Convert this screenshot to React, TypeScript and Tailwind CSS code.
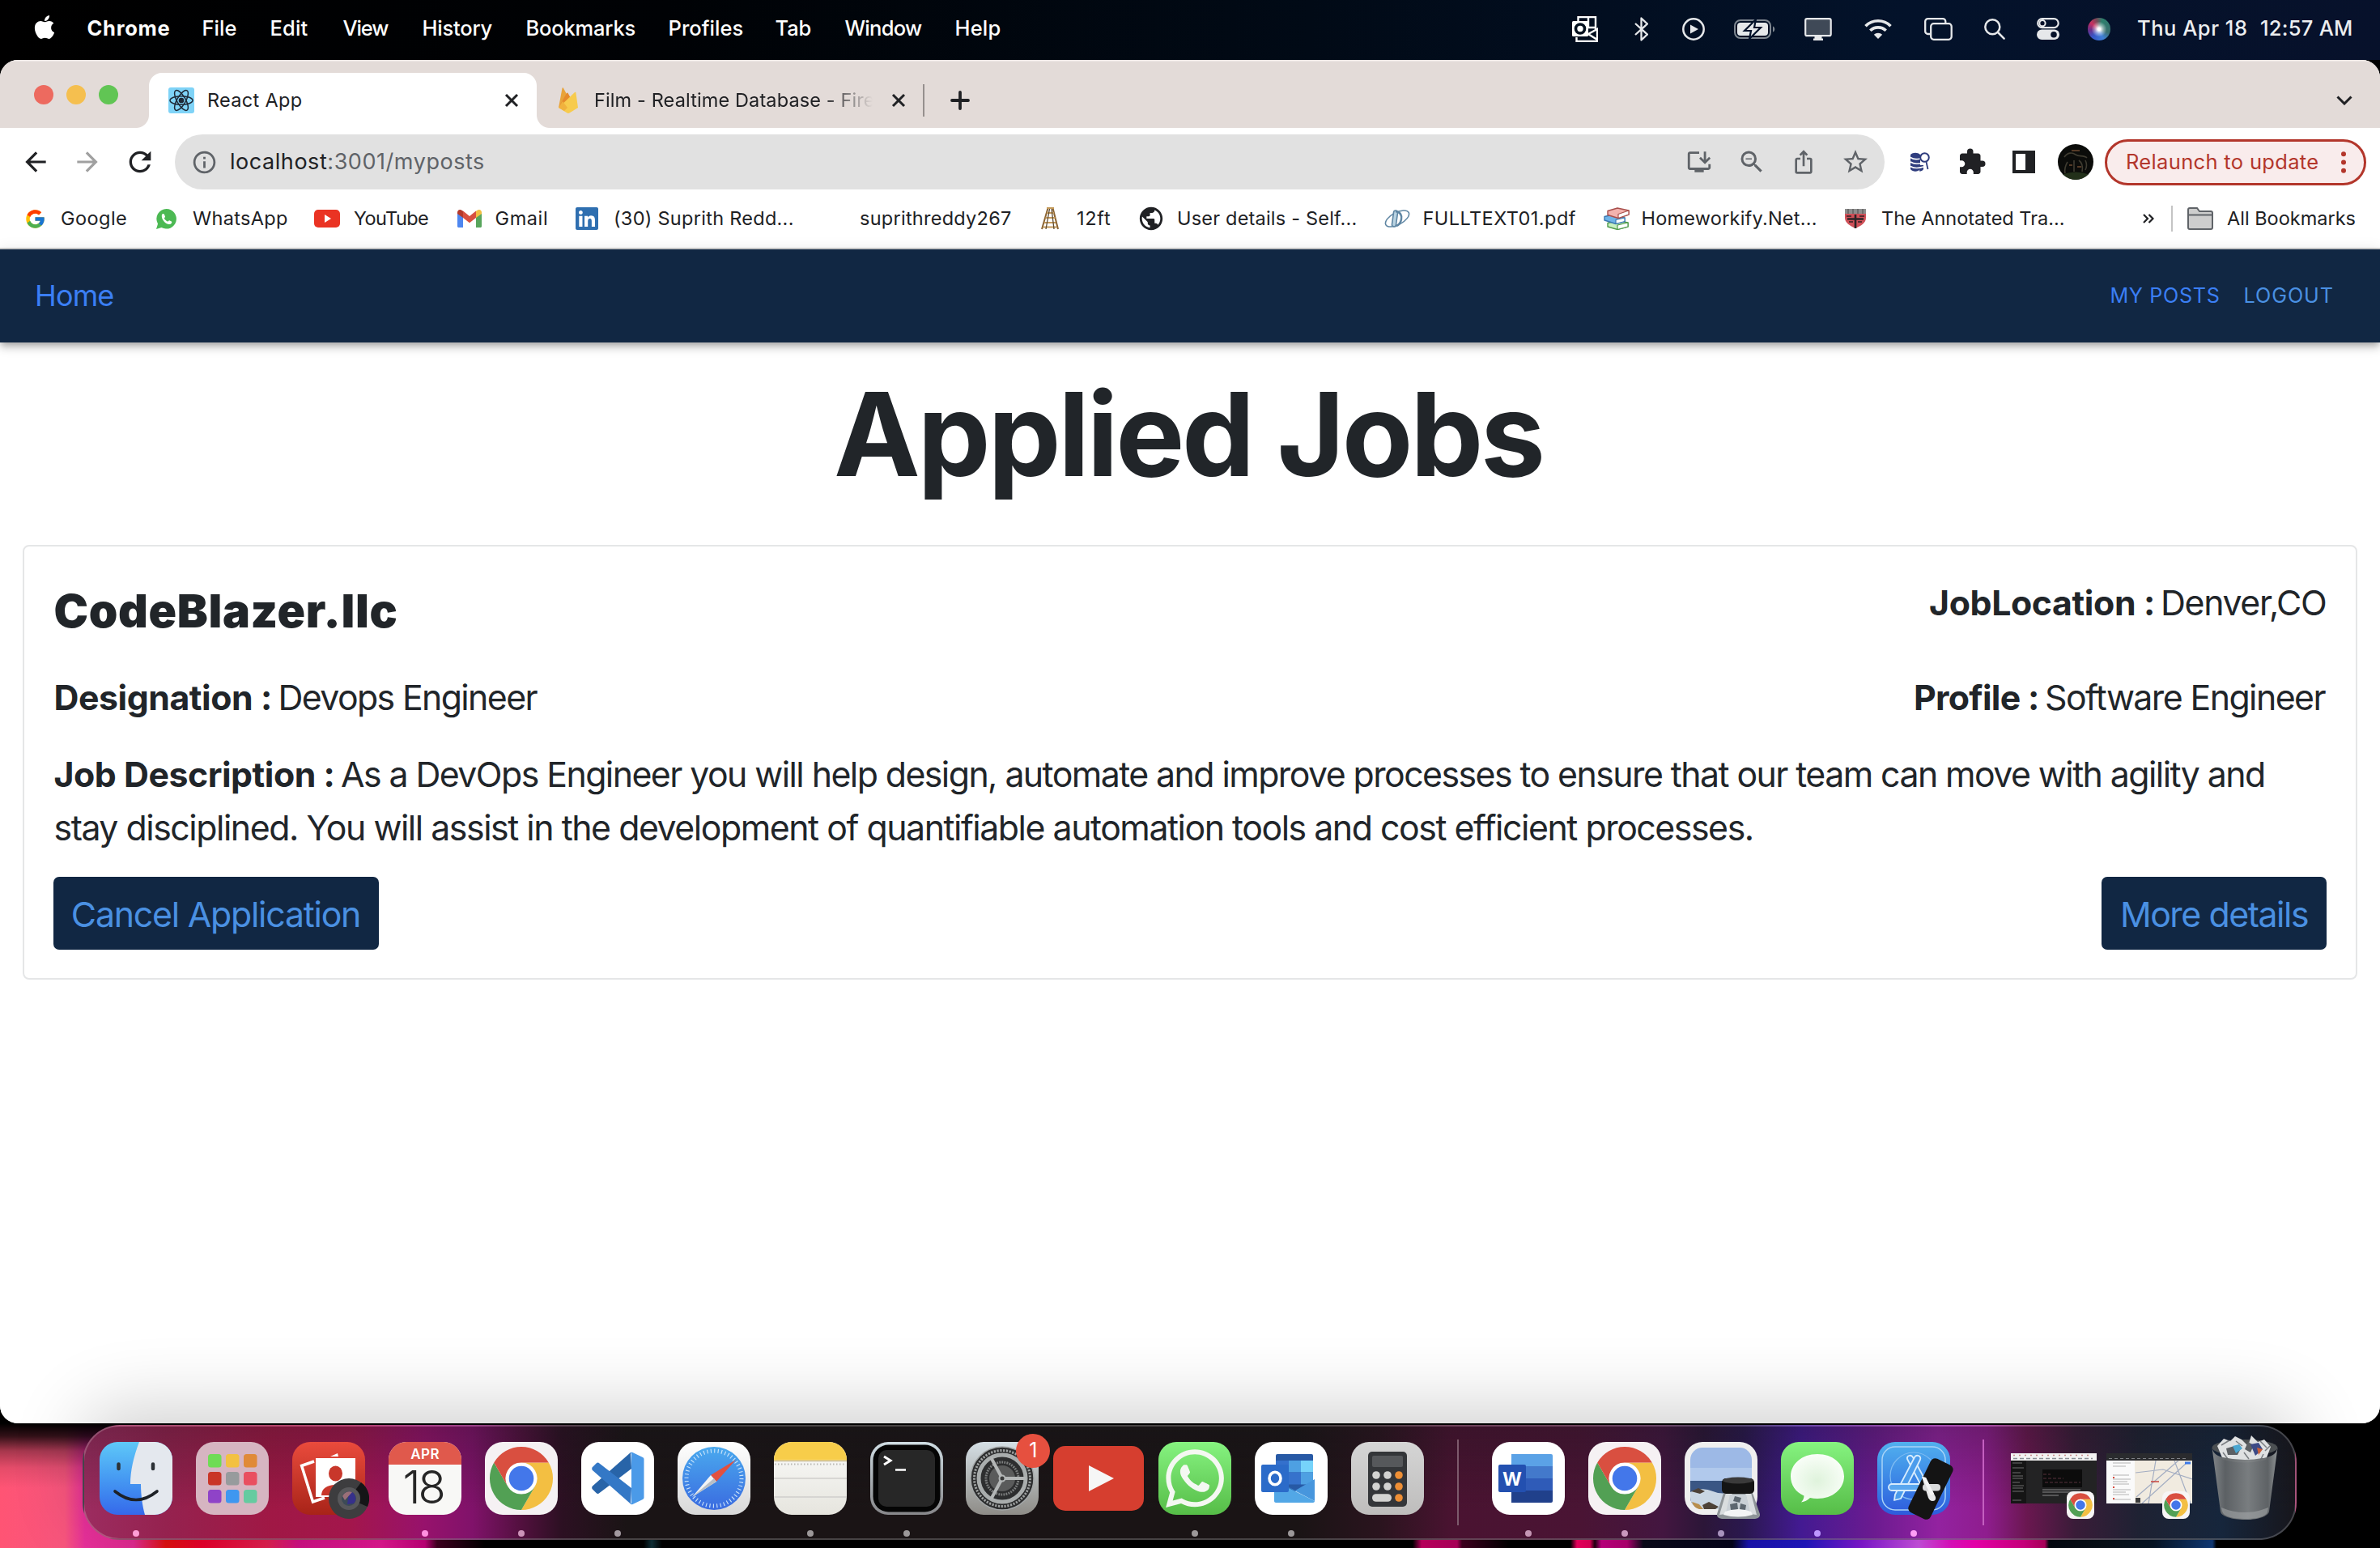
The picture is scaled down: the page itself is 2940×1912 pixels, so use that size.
import type { ReactNode } from "react";
import { FaApple, FaWhatsapp, FaLinkedin } from "react-icons/fa";
import { FcGoogle } from "react-icons/fc";
import {
  MdArrowBack,
  MdArrowForward,
  MdRefresh,
  MdInfoOutline,
  MdInstallDesktop,
  MdZoomOut,
  MdIosShare,
  MdStarOutline,
  MdExtension,
  MdPublic,
} from "react-icons/md";

/* ---------- macOS menu bar ---------- */

const menus = [
  ["Chrome", "w-[142px] tracking-[0.72px] font-bold"],
  ["File", "w-[84px] tracking-[0.04px]"],
  ["Edit", "w-[90px] tracking-[0.14px]"],
  ["View", "w-[98px] tracking-[-1.1px]"],
  ["History", "w-[128px] tracking-[-0.21px]"],
  ["Bookmarks", "w-[176px] tracking-[-0.18px]"],
  ["Profiles", "w-[132px] tracking-[0.04px]"],
  ["Tab", "w-[86px] tracking-[-0.13px]"],
  ["Window", "w-[136px] tracking-[-0.7px]"],
  ["Help", "w-[100px] tracking-[0.2px]"],
];

function StatusIcons() {
  const ink = "#e6e8ea";
  return (
    <>
      <svg className="mr-[45px] h-8 w-8 shrink-0" viewBox="0 0 32 32" fill="none">
        <path d="M7.500 6V1H29v15M5.500 26v5H31V16L20 22l11 7M20 1v13h9" stroke="#fff" strokeWidth="2.400" />
        <rect x="0" y="6" width="20" height="19" rx="1.500" fill="#fff" />
        <circle cx="10" cy="15.500" r="5.500" stroke="#03101f" strokeWidth="3.600" />
      </svg>
      <svg className="mr-[42px] h-[30px] w-[17px] shrink-0" viewBox="0 0 17 30" fill="none" stroke={ink} strokeWidth="2.300" strokeLinejoin="round">
        <path d="M1 8l15 13.500L8.500 28.500V1.500L16 8.500 1 22" />
      </svg>
      <svg className="mr-9 h-7 w-7 shrink-0" viewBox="0 0 28 28" fill="none">
        <circle cx="14" cy="14" r="12.700" stroke={ink} strokeWidth="2.500" />
        <path d="M10 8.500v11l10-5.500z" fill={ink} />
      </svg>
      <svg className="mr-9 h-6 w-[51px] shrink-0" viewBox="0 0 51 24" fill="none">
        <rect x="1" y="1" width="44" height="22" rx="7" stroke="#7f8790" strokeWidth="2" />
        <path d="M48 8.500c3 1 3 6 0 7z" fill="#7f8790" />
        <rect x="4" y="4" width="38" height="16" rx="4" fill={ink} />
        <path d="M27 0L13 14h8l-2 10 14-14h-8z" fill={ink} stroke="#04122a" strokeWidth="2.200" />
      </svg>
      <svg className="mr-10 h-7 w-[34px] shrink-0" viewBox="0 0 34 28" fill="none">
        <rect x="1.200" y="1.200" width="31.500" height="21" rx="2" fill="#3f4957" stroke={ink} strokeWidth="2.200" />
        <path d="M12.500 23h9v2.500h1.500V28H11v-2.500h1.500z" fill={ink} />
      </svg>
      <svg className="mr-10 h-[25px] w-[34px] shrink-0" viewBox="0 0 34 25" fill="none" stroke={ink} strokeWidth="3.600">
        <path d="M1.500 9.200a22 22 0 0 1 31 0M7.300 14.800a14 14 0 0 1 19.400 0" />
        <path d="M17 25l-5.200-5.200a7.500 7.500 0 0 1 10.400 0z" fill={ink} stroke="none" />
      </svg>
      <svg className="mr-[39px] h-7 w-[35px] shrink-0" viewBox="0 0 35 28" fill="none" stroke={ink} strokeWidth="2.300">
        <rect x="8.200" y="7.200" width="25.500" height="19.600" rx="3.500" />
        <path d="M8 20H4.500A3.300 3.300 0 0 1 1.200 16.700V4.500A3.300 3.300 0 0 1 4.500 1.200H23a3.300 3.300 0 0 1 3.300 3.300V7" />
      </svg>
      <svg className="mr-[39px] h-[26px] w-[26px] shrink-0" viewBox="0 0 26 26" fill="none" stroke={ink} strokeWidth="2.500" strokeLinecap="round">
        <circle cx="10.300" cy="10.300" r="9" />
        <path d="M17 17l7.600 7.600" />
      </svg>
      <svg className="mr-[35px] h-[27px] w-7 shrink-0" viewBox="0 0 28 27" fill="none">
        <rect x="1.200" y="1.200" width="25.500" height="11" rx="5.500" stroke={ink} strokeWidth="2.200" />
        <circle cx="7" cy="6.700" r="3.600" stroke={ink} strokeWidth="2" />
        <rect x="0" y="14.500" width="28" height="12.500" rx="6.200" fill={ink} />
        <circle cx="21" cy="20.700" r="3.800" fill="#06122a" />
      </svg>
      <div className="mr-8 h-7 w-7 shrink-0 rounded-full bg-[radial-gradient(circle_at_50%_50%,#fff_0_8%,rgba(255,255,255,0.45)_26%,transparent_48%),conic-gradient(from_20deg,#2c7f6c,#3a6f70_25%,#3f7fd8_38%,#3757c8_55%,#6a2f8a_68%,#c8305f_80%,#7a4a58_90%,#2c7f6c)]" />
    </>
  );
}

function MenuBar() {
  return (
    <div className="flex h-[74px] items-center bg-[linear-gradient(to_right,#000_0%,#000205_28%,#010a16_55%,#03122a_80%,#07112b_100%)] pb-[3px] pl-[38.5px] text-[25.5px] font-medium text-white">
      <div className="w-[69px] shrink-0">
        <FaApple className="-mt-1 h-[33px] w-8" />
      </div>
      {menus.map(([label, cls]) => (
        <span key={label} className={`shrink-0 whitespace-nowrap ${cls}`}>
          {label}
        </span>
      ))}
      <div className="flex flex-1 items-center pl-[662.5px]">
        <StatusIcons />
        <span className="ml-px w-[152px] shrink-0 whitespace-nowrap tracking-[0.53px] text-[#eceef0]">Thu Apr 18</span>
        <span className="whitespace-nowrap tracking-[0.25px] text-[#eceef0]">12:57 AM</span>
      </div>
    </div>
  );
}

/* ---------- Chrome window frame ---------- */

function CloseX() {
  return (
    <svg className="h-[18px] w-[18px] shrink-0" viewBox="0 0 18 18" stroke="#202124" strokeWidth="3" fill="none">
      <path d="M2 2l14 14M16 2L2 16" />
    </svg>
  );
}

function TabStrip() {
  return (
    <div className="flex h-[84px] items-end border-t-2 border-[#ece6e4] bg-[#e3dbd8] text-[23.5px] text-[#202124]">
      <div className="flex h-full w-[168px] shrink-0 gap-4 pt-[29px] pl-[42px]">
        <span className="h-6 w-6 rounded-full bg-[#ed6a5f]" />
        <span className="h-6 w-6 rounded-full bg-[#f5bf4f]" />
        <span className="h-6 w-6 rounded-full bg-[#61c554]" />
      </div>
      <span className="h-4 w-4 shrink-0 bg-[radial-gradient(circle_at_0_0,#e3dbd8_15.5px,#fff_16.5px)]" />
      <div className="flex h-[68px] w-[479px] shrink-0 items-center rounded-t-2xl bg-white pr-[22px] pl-6">
        <svg className="h-8 w-8 shrink-0" viewBox="0 0 32 32" fill="none" stroke="#1f2937" strokeWidth="1.500">
          <rect width="32" height="32" rx="3" fill="#7fd3f7" stroke="none" />
          <ellipse cx="16" cy="16" rx="14" ry="5.300" />
          <ellipse cx="16" cy="16" rx="14" ry="5.300" transform="rotate(60 16 16)" />
          <ellipse cx="16" cy="16" rx="14" ry="5.300" transform="rotate(120 16 16)" />
          <circle cx="16" cy="16" r="2.600" fill="#1f2937" />
        </svg>
        <span className="flex-1 pl-4 tracking-[0.3px] whitespace-nowrap">React App</span>
        <CloseX />
      </div>
      <span className="h-4 w-4 shrink-0 bg-[radial-gradient(circle_at_100%_0,#e3dbd8_15.5px,#fff_16.5px)]" />
      <div className="flex h-[68px] flex-1 items-center pl-[11px]">
        <svg className="h-8 w-6 shrink-0" viewBox="0 0 24 32">
          <path d="M0 25L4.500 1c.2-.8 1-.9 1.400-.2L12 12z" fill="#e8a33a" />
          <path d="M0 25L10 7c.4-.7 1.300-.7 1.600 0L16 15z" fill="#e58a2c" />
          <path d="M0 25L20 6c.6-.5 1.300-.2 1.400.4L24 25l-10.500 6.500a3 3 0 0 1-3 0z" fill="#f7cb4d" />
          <path d="M0 25l5-8 6 8-4 4z" fill="#f0b23e" />
        </svg>
        <span className="ml-5 w-[358px] shrink-0 tracking-[0.12px] whitespace-nowrap mask-[linear-gradient(to_right,#000_285px,transparent_344px)]">
          Film - Realtime Database - Fire
        </span>
        <span className="w-[9px] shrink-0" />
        <CloseX />
        <span className="ml-[21px] h-10 w-0.5 bg-[#96908e]" />
        <svg className="ml-8 h-6 w-6 shrink-0" viewBox="0 0 24 24" stroke="#202124" strokeWidth="3.800" strokeLinecap="round">
          <path d="M12 2v20M2 12h20" />
        </svg>
        <svg className="mr-[34px] ml-auto h-3 w-5" viewBox="0 0 20 12" fill="none" stroke="#202124" strokeWidth="3">
          <path d="M1.500 1.500L10 10l8.500-8.500" />
        </svg>
      </div>
    </div>
  );
}

function Toolbar() {
  return (
    <div className="flex h-[84px] items-center bg-white pr-[17px] pl-[25px] text-[#202124]">
      <MdArrowBack className="mr-[26px] h-[38px] w-[38px] shrink-0" />
      <MdArrowForward className="mr-[26px] h-[38px] w-[38px] shrink-0 text-[#a0a0a0]" />
      <MdRefresh className="mr-[23px] h-10 w-10 shrink-0" />
      <div className="flex h-[68px] w-[2112px] shrink-0 items-center rounded-full bg-[#e1e1e1] pl-5 text-[27px] text-[#5f6368]">
        <MdInfoOutline className="h-[33px] w-[33px] shrink-0" />
        <span className="flex-1 pl-[15px] tracking-[0.55px] whitespace-nowrap">
          <span className="text-[#202124]">localhost</span>:3001/myposts
        </span>
        <MdInstallDesktop className="h-[34px] w-[34px] shrink-0" />
        <MdZoomOut className="ml-[30px] h-9 w-9 shrink-0" />
        <MdIosShare className="ml-[30px] h-8 w-8 shrink-0" />
        <MdStarOutline className="mr-[18px] ml-[30px] h-9 w-9 shrink-0" />
      </div>
      <svg className="ml-8 h-6 w-6 shrink-0" viewBox="0 0 24 24" fill="none">
        <path d="M0 3c3-3 9-3 12 0v18c-3 3.500-9 3.500-12 0z" fill="#2f3d7e" />
        <path d="M12 16h4v5c-1 2-3 2.500-5 2.500z" fill="#2f3d7e" />
        <path d="M0 6.500c4 3 8 2.500 12 1.500M0 12c4 3 9 3 16 1M0 17.500c5 3 10 2.500 16 .5" stroke="#fff" strokeWidth="1.600" />
        <circle cx="17.500" cy="6.500" r="5.300" stroke="#2f3d7e" strokeWidth="2" fill="#fff" />
        <path d="M19.500 12l2 9" stroke="#2f3d7e" strokeWidth="1.800" />
      </svg>
      <MdExtension className="ml-[34px] h-9 w-9 shrink-0" />
      <span className="ml-8 h-7 w-7 shrink-0 border-[4px] border-r-[12px] border-[#202124]" />
      <svg className="ml-7 h-[44px] w-[44px] shrink-0 rounded-full" viewBox="0 0 44 44" fill="none">
        <rect width="44" height="44" fill="#0b0c0a" />
        <path d="M8 16c4-6 10-6 14-3s10 0 14 4M12 22c-3 5-4 9-3 14M20 20v14M26 20c4 3 5 9 4 14M34 20c2 4 2 8 0 12" stroke="#3f3c31" strokeWidth="1.600" />
        <path d="M17 8h10M14 26h4M24 28h5" stroke="#6d4932" strokeWidth="1.500" />
        <path d="M4 38q18-7 36 0l-6 6H10z" fill="#22301a" />
      </svg>
      <div className="ml-3.5 flex h-[57px] w-[323px] shrink-0 items-center rounded-full border-[3px] border-[#b3362b] bg-[#f9ecec] pl-[23px] text-[25.5px] text-[#b3362b]">
        <span className="tracking-[0.33px] whitespace-nowrap">Relaunch to update</span>
        <svg className="ml-7 h-[27px] w-1.5 shrink-0 fill-[#b3362b]" viewBox="0 0 6 27">
          <circle cx="3" cy="3.200" r="3" />
          <circle cx="3" cy="13.500" r="3" />
          <circle cx="3" cy="23.800" r="3" />
        </svg>
      </div>
    </div>
  );
}

const GmailIcon = (
  <svg className="h-[22px] w-[30px]" viewBox="0 0 30 22">
    <path d="M0 3v17.500c0 .8.700 1.500 1.500 1.500H7V8z" fill="#4e87f0" />
    <path d="M30 3v17.500c0 .8-.7 1.500-1.500 1.500H23V8z" fill="#58a55c" />
    <path d="M7 1.500L15 8l8-6.500V10l-8 6.200L7 10z" fill="#d8503f" />
    <path d="M0 3.200C0 .5 3-.8 5 .5l2 1.300V10L0 5z" fill="#b5392b" />
    <path d="M30 3.200c0-2.700-3-4-5-2.700l-2 1.300V10l7-5z" fill="#f2bf42" />
  </svg>
);

const bookmarks: { label: string; iconCell: string; textCell: string; icon: ReactNode }[] = [
  { label: "Google", iconCell: "w-[45px]", textCell: "w-[118px] tracking-[0.44px]", icon: <FcGoogle className="h-[27px] w-[27px]" /> },
  {
    label: "WhatsApp",
    iconCell: "w-[45px]",
    textCell: "w-[150px] tracking-[0.33px]",
    icon: (
      <svg className="h-[25px] w-[25px]" viewBox="0 0 25 25">
        <path d="M12.500 0a12.300 12.300 0 1 1-6 23L0 25l2-6.500A12.300 12.300 0 0 1 12.500 0z" fill="#4cb953" />
        <path d="M7 7c1-1.500 2.500-1.500 3 0l1 2.500c.2.800-1.500 1.800-1 2.500 1 1.700 2.400 2.800 4 3.500.8.300 1.500-1.700 2.300-1.300l2.500 1.200c1.300 1-.3 3.600-2.800 3.600C11.500 19 5.500 12.500 7 7z" fill="#fff" />
      </svg>
    ),
  },
  {
    label: "YouTube",
    iconCell: "w-[49px]",
    textCell: "w-[128px] tracking-[-0.61px]",
    icon: (
      <svg className="h-[22px] w-8" viewBox="0 0 32 22">
        <rect width="32" height="22" rx="5" fill="#ea3323" />
        <path d="M13 6v10l8-5z" fill="#fff" />
      </svg>
    ),
  },
  { label: "Gmail", iconCell: "w-[46.5px]", textCell: "w-[99.5px] tracking-[0.6px]", icon: GmailIcon },
  { label: "(30) Suprith Redd...", iconCell: "w-[47px]", textCell: "w-[259px] tracking-[0.28px]", icon: <FaLinkedin className="-ml-0.5 h-8 w-8 text-[#2f6fb0]" /> },
  { label: "suprithreddy267", iconCell: "w-[45px]", textCell: "w-[224px] tracking-[0.26px]", icon: null },
  {
    label: "12ft",
    iconCell: "w-[44px]",
    textCell: "w-[78px] tracking-[0.74px]",
    icon: (
      <svg className="h-7 w-[22px]" viewBox="0 0 22 28" fill="none">
        <path d="M8.500 1L1 27M14.500 1L21 27" stroke="#8a6434" strokeWidth="2" />
        <path d="M7 1h9M7 7h9M5.500 13h12M4 19h14M2.500 24.500h17" stroke="#c49a5a" strokeWidth="2" />
        <path d="M10.500 2L6 27M13 2l3 25" stroke="#5e4b33" strokeWidth="1.300" />
      </svg>
    ),
  },
  { label: "User details - Self...", iconCell: "w-[46px]", textCell: "w-[256px] tracking-[0.2px]", icon: <MdPublic className="-ml-[3px] h-[34px] w-[34px] shrink-0" /> },
  {
    label: "FULLTEXT01.pdf",
    iconCell: "w-[47.5px]",
    textCell: "w-[223px] tracking-[0.45px]",
    icon: (
      <svg className="h-7 w-8" viewBox="0 0 32 28" fill="none" stroke="#5f86a3" strokeWidth="1.600">
        <ellipse cx="16" cy="14" rx="16" ry="7.500" transform="rotate(-28 16 14)" />
        <rect x="10.500" y="4" width="5" height="20" rx="2.500" transform="rotate(8 13 14)" fill="#b9d3e2" />
        <path d="M14 5c6 1 8 5 7 10s-3 7-6 8" strokeWidth="2.500" />
      </svg>
    ),
  },
  {
    label: "Homeworkify.Net...",
    iconCell: "w-[47px]",
    textCell: "w-[250.5px] tracking-[0.22px]",
    icon: (
      <svg className="h-7 w-8" viewBox="0 0 32 28" strokeLinejoin="round">
        <path d="M5 19.500l12-3 13 2.500v5l-13 3.500L5 24z" fill="#c9f0c1" stroke="#4f9a4a" strokeWidth="1.400" />
        <path d="M17 22l13-3v5l-13 3.500z" fill="#fff" stroke="#4f9a4a" strokeWidth="1.200" />
        <path d="M1 11.500l11-2.500 14 4v4.500l-11 3L1 16z" fill="#6fb3e8" stroke="#3c79b0" strokeWidth="1.400" />
        <path d="M15 15.500l11-2.500v4.500l-11 3z" fill="#fff" stroke="#3c79b0" strokeWidth="1.200" />
        <path d="M5 4.500L17 1l14 3v5l-13 4.500L5 9.500z" fill="#f3b2ae" stroke="#a84f4c" strokeWidth="1.400" />
        <path d="M18 8.500L31 4v5l-13 4.500z" fill="#fff" stroke="#a84f4c" strokeWidth="1.200" />
      </svg>
    ),
  },
  {
    label: "The Annotated Tra...",
    iconCell: "w-[46px]",
    textCell: "w-[323px] tracking-[-0.02px]",
    icon: (
      <svg className="h-6 w-7" viewBox="0 0 28 24">
        <path d="M1 6h26v5c0 6-6 10-13 13C7 21 1 17 1 11z" fill="#cf5058" />
        <path d="M1 0h26v6H1z" fill="#8d8d8d" />
        <path d="M5 0v6M11 0v6M17 0v6M23 0v6" stroke="#6c6c6c" strokeWidth="2" />
        <path d="M14 7v17M4 12.500h20" stroke="#2b2427" strokeWidth="2.600" />
        <path d="M3 9h6M19 9h6M6 16h5M17 16h5" stroke="#5a2b30" strokeWidth="2" />
      </svg>
    ),
  },
];

function BookmarksBar() {
  return (
    <div className="flex h-[66px] items-center border-b-2 border-[#cfcfcf] bg-white pb-2 pl-[30px] text-[23.500px] text-[#202124]">
      {bookmarks.map((b) => (
        <div key={b.label} className="flex shrink-0 items-center">
          <span className={`flex shrink-0 ${b.iconCell}`}>{b.icon}</span>
          <span className={`shrink-0 whitespace-nowrap ${b.textCell}`}>{b.label}</span>
        </div>
      ))}
      <svg className="h-3 w-3.5 shrink-0" viewBox="0 0 14 12" fill="none" stroke="#202124" strokeWidth="2.200">
        <path d="M1 1l5 5-5 5M7.500 1l5 5-5 5" />
      </svg>
      <span className="ml-[21px] h-8 w-0.5 shrink-0 bg-[#c4c4c4]" />
      <svg className="ml-[18px] h-7 w-8 shrink-0" viewBox="0 0 32 28" fill="#cdcdcd" stroke="#5f6368" strokeWidth="2">
        <path d="M1 3a2 2 0 0 1 2-2h9l3 4h14a2 2 0 0 1 2 2v18a2 2 0 0 1-2 2H3a2 2 0 0 1-2-2z" />
        <path d="M1 9.500h30" />
      </svg>
      <span className="ml-[17px] tracking-[0px] whitespace-nowrap">All Bookmarks</span>
    </div>
  );
}

/* ---------- Page ---------- */

function Page() {
  return (
    <div className="flex-1 bg-white text-[#212529]">
      <nav className="flex h-[115px] items-center justify-between bg-[#112743] pr-[57px] pl-[43px] shadow-[0_4px_7px_-2px_rgba(0,0,0,0.2),0_7px_9px_rgba(0,0,0,0.14),0_2px_18px_rgba(0,0,0,0.12)]">
        <span className="pb-px text-[36px] tracking-[-0.85px] text-[#3b7ff5]">Home</span>
        <div className="flex pt-px text-[25.2px] whitespace-nowrap">
          <span className="w-[165px] tracking-[0.65px] text-[#3b7ff5]">MY POSTS</span>
          <span className="tracking-[0.95px] text-[#4a90e2]">LOGOUT</span>
        </div>
      </nav>
      <h1 className="pt-[27px] pr-1 text-center text-[143px] leading-[172px] font-bold tracking-[-3.29px]">Applied Jobs</h1>
      <section className="mx-7 mt-[51px] rounded-[8px] border-2 border-[#e5e6e7] pt-[37px] pr-9 pb-[35px] pl-[36.5px] text-[42.8px] leading-[66px]">
        <div className="flex h-[85px] items-start justify-between">
          <h2 className="text-[57px] leading-[85px] font-black tracking-[0.65px]">CodeBlazer.llc</h2>
          <p className="flex whitespace-nowrap">
            <b className="w-[286px] tracking-[-0.37px]">JobLocation :</b>
            <span className="w-[205px] tracking-[-1.35px]">Denver,CO</span>
          </p>
        </div>
        <div className="mt-8 flex justify-between whitespace-nowrap">
          <p className="flex">
            <b className="w-[277px] tracking-[-0.45px]">Designation :</b>
            <span className="tracking-[-1.61px]">Devops Engineer</span>
          </p>
          <p className="flex">
            <b className="w-[162px] tracking-[-0.7px]">Profile :</b>
            <span className="w-[348px] tracking-[-1.56px]">Software Engineer</span>
          </p>
        </div>
        <div className="mt-[29px] whitespace-nowrap">
          <p className="flex">
            <b className="w-[354.5px] tracking-[-0.47px]">Job Description :</b>
            <span className="tracking-[-1.55px]">
              As a DevOps Engineer you will help design, automate and improve processes to ensure that our team can move with agility and
            </span>
          </p>
          <p className="tracking-[-1.45px]">
            stay disciplined. You will assist in the development of quantifiable automation tools and cost efficient processes.
          </p>
        </div>
        <div className="mt-[27px] flex justify-between text-[#4a90e2]">
          <button className="-ml-px h-[90px] w-[402px] rounded-[7px] bg-[#112743] pt-[3px] tracking-[-1.22px]">Cancel Application</button>
          <button className="h-[90px] w-[278px] rounded-[7px] bg-[#112743] pt-[3px] tracking-[-1.44px]">More details</button>
        </div>
      </section>
    </div>
  );
}

/* ---------- Dock ---------- */

function Tile({ bg, children }: { bg: string; children?: ReactNode }) {
  return (
    <div className={`h-[90px] w-[90px] overflow-hidden rounded-[22px] ${bg}`}>
      <svg className="h-full w-full" viewBox="0 0 90 90" fill="none">
        {children}
      </svg>
    </div>
  );
}

function Finder() {
  return (
    <Tile bg="bg-linear-to-b from-[#5fc8f8] to-[#3668ea]">
      <path d="M49 0C42 18 38 36 38 52H51c0 14 2 27 5 38h34V0z" fill="#e4e8ee" />
      <path d="M23.500 27.500v5.500M66 27.500v5.500" stroke="#2c3136" strokeWidth="4.500" strokeLinecap="round" />
      <path d="M19 61q26 21 52 0" stroke="#1d2126" strokeWidth="3.600" strokeLinecap="round" />
    </Tile>
  );
}

const padColors = ["#6fdc55", "#f3c141", "#e08a38", "#c93527", "#979b9d", "#e94f60", "#8f43c8", "#3f97f0", "#65cba0"];

function Launchpad() {
  return (
    <Tile bg="bg-[#d6b5c1]">
      {padColors.map((c, i) => (
        <rect key={c} x={15 + (i % 3) * 22} y={15 + Math.floor(i / 3) * 22} width="16.500" height="16.500" rx="3.500" fill={c} />
      ))}
    </Tile>
  );
}

function PhotoBooth() {
  return (
    <div className="relative">
      <Tile bg="bg-linear-to-b from-[#ea4b3c] to-[#a82318]">
        <path d="M10 30l17-6M11.500 29l14 45L40 69" stroke="#fff" strokeWidth="3.500" />
        <path d="M47 18l9-4 1 4z" fill="#fff" />
        <rect x="29" y="20" width="49" height="48" fill="#fff" />
        <ellipse cx="53.500" cy="39" rx="8.500" ry="9.500" fill="#c8372b" />
        <path d="M36 66c0-8 7-13 17-13s17 5 17 13z" fill="#c8372b" />
      </Tile>
      <svg className="absolute top-[45px] left-[45px] h-[50px] w-[50px]" viewBox="0 0 50 50">
        <circle cx="25" cy="25" r="25" fill="#3d3d3f" />
        <path d="M25 25L40 5a25 25 0 0 1 8 30z" fill="#151517" />
        <circle cx="25" cy="25" r="14" fill="#58585b" />
        <circle cx="25" cy="25" r="9" fill="#3c4a56" />
        <path d="M25 16a9 9 0 0 1 6 15l-8 1z" fill="#36308a" />
        <path d="M17 22a9 9 0 0 1 12-5l-9 10z" fill="#9a6f78" />
      </svg>
    </div>
  );
}

function Calendar() {
  return (
    <div className="h-[90px] w-[90px] overflow-hidden rounded-[22px] bg-[#f8f8f6] text-center">
      <div className="h-[28px] bg-[#e0594c] pt-[2px] text-[17px] leading-[27px] font-semibold tracking-[0.5px] text-white">APR</div>
      <div className="pr-[5px] text-[56px] leading-[57px] font-light tracking-[-3px] text-[#262626]">18</div>
    </div>
  );
}

function ChromeMark() {
  return (
    <>
      <path d="M78.800 25.500A39 39 0 0 1 45 84L61.900 54.750A19.500 19.500 0 0 0 45 25.500z" fill="#f3bf42" />
      <path d="M45 84A39 39 0 0 1 11.200 25.500L28.100 54.750A19.500 19.500 0 0 0 61.900 54.750z" fill="#52a054" />
      <path d="M11.200 25.500A39 39 0 0 1 78.800 25.500H45A19.500 19.500 0 0 0 28.100 54.750z" fill="#d94f40" />
      <circle cx="45" cy="45" r="19" fill="#fff" />
      <circle cx="45" cy="45" r="15.300" fill="#4377ea" />
    </>
  );
}

function ChromeTile() {
  return (
    <Tile bg="bg-[#f5f1f3]">
      <ChromeMark />
    </Tile>
  );
}

function VSCode() {
  return (
    <Tile bg="bg-white">
      <path d="M61 13L14.500 54a3 3 0 0 0 0 5l4 4a3 3 0 0 0 4 0L62 33z" fill="#2864a8" />
      <path d="M61 76.500L14.500 35.500a3 3 0 0 1 0-5l4-4a3 3 0 0 1 4 0L62 57z" fill="#3478c6" />
      <path d="M60 14c1-1 2-1.500 3.500-1L76 19c1 .5 1.500 1.500 1.500 2.500v47c0 1-.5 2-1.500 2.500l-12.500 6c-1.500.5-2.500 0-3.500-1 1 .5 2 0 2-2V15.500c0-1.500-1-2-2-1.500z" fill="#4b9ae8" />
    </Tile>
  );
}

function Safari() {
  return (
    <Tile bg="bg-linear-to-b from-white to-[#d8d8d8]">
      <defs>
        <linearGradient id="safari" x1="0" y1="0" x2="0" y2="1">
          <stop offset="0" stopColor="#4aa9ee" />
          <stop offset="1" stopColor="#3a6be0" />
        </linearGradient>
      </defs>
      <circle cx="45" cy="45" r="39" fill="url(#safari)" />
      <circle cx="45" cy="45" r="34" stroke="#cfe6fa" strokeWidth="5" strokeDasharray="1.100 3.350" />
      <path d="M72 22L41 41l7 8z" fill="#e2503f" />
      <path d="M18 68l23-27 7 8z" fill="#f1f3f5" />
      <path d="M18 68l27-23 3 4z" fill="#b9bfc6" />
    </Tile>
  );
}

function Notes() {
  return (
    <Tile bg="bg-linear-to-b from-[#fafaf9] to-[#e6e5de]">
      <rect width="90" height="22.500" fill="#f7cd4a" />
      <path d="M0 23.500h90" stroke="#b7a36a" strokeWidth="1.200" />
      <path d="M1 27.500h88" stroke="#b9b8b4" strokeWidth="2" strokeDasharray="1.500 2.500" />
      <path d="M0 45h90M0 68h90" stroke="#cfcecb" strokeWidth="1.400" />
    </Tile>
  );
}

function Terminal() {
  return (
    <Tile bg="bg-linear-to-b from-[#cfdde3] to-[#87878a]">
      <rect x="3.500" y="3.500" width="83" height="83" rx="19" fill="#050505" />
      <rect x="10" y="10" width="70" height="70" rx="10" fill="#272727" />
      <path d="M17 18l8 5-8 5" stroke="#fff" strokeWidth="3" />
      <path d="M31 34.500h13" stroke="#fff" strokeWidth="2.600" />
    </Tile>
  );
}

function Settings() {
  return (
    <div className="relative">
      <Tile bg="bg-linear-to-b from-[#d5dfe5] to-[#8e8c87]">
        <circle cx="45" cy="45" r="39" fill="#2d2e2f" stroke="#a3a7a8" strokeWidth="1.500" />
        <circle cx="45" cy="45" r="34.500" stroke="#9fa2a2" strokeWidth="3" strokeDasharray="2.200 1.600" />
        <circle cx="45" cy="45" r="29" stroke="#a9adad" strokeWidth="5" />
        <circle cx="45" cy="45" r="20" stroke="#7c7e7e" strokeWidth="3" strokeDasharray="1.800 1.300" />
        <circle cx="45" cy="45" r="16" fill="#5a5b5b" />
        <path d="M45 45L31 19M45 45h29M45 45L31 71" stroke="#b3b6b6" strokeWidth="4" />
        <circle cx="45" cy="45" r="3.500" fill="#3a3b3b" stroke="#b3b6b6" strokeWidth="2" />
      </Tile>
      <span className="absolute -top-[10px] left-[62px] flex h-[42px] w-[42px] items-center justify-center rounded-full bg-[#e6503f] text-[25px] text-white">
        1
      </span>
    </div>
  );
}

function YouTubeTile() {
  return (
    <svg className="-mx-[11px] my-[5px] h-20 w-28" viewBox="0 0 112 80">
      <rect width="112" height="80" rx="15" fill="#d63e2f" />
      <path d="M44 24v32l31-16z" fill="#f6f6f6" />
    </svg>
  );
}

function WhatsAppTile() {
  return (
    <div className="flex h-[90px] w-[90px] items-center justify-center rounded-[22px] bg-linear-to-b from-[#86f380] to-[#56bd47]">
      <FaWhatsapp className="h-[82px] w-[82px] text-[#f4f8f2]" />
    </div>
  );
}

function Outlook() {
  return (
    <Tile bg="bg-white">
      <rect x="26" y="15" width="46" height="46" rx="2" fill="#2759a5" />
      <rect x="26" y="23" width="16" height="30" fill="#3470cc" />
      <rect x="42" y="23" width="15" height="14.500" fill="#4ea0e2" />
      <rect x="57" y="23" width="15" height="14.500" fill="#76d3fa" />
      <rect x="42" y="37.500" width="15" height="15" fill="#3672cc" />
      <rect x="57" y="37.500" width="15" height="15" fill="#4ea0e2" />
      <path d="M24 47l50 26V46L50 60z" fill="#4796dd" />
      <path d="M24 48v25c0 1 1 2 2 2h46c1 0 2-1 2-2z" fill="#52a7e6" />
      <rect x="8" y="28" width="34" height="34" rx="2" fill="#2b6bc9" />
      <ellipse cx="25" cy="45" rx="7" ry="7.800" stroke="#fff" strokeWidth="3.600" />
    </Tile>
  );
}

function Calculator() {
  return (
    <Tile bg="bg-linear-to-b from-[#d5d5d5] to-[#bebdbc]">
      <rect x="21" y="12" width="48" height="68" rx="5" fill="#343639" />
      <rect x="26" y="17" width="38" height="14" rx="2" fill="#56585b" />
      {[41, 55, 69].map((y) => (
        <circle key={y} cx="59" cy={y} r="4.800" fill="#ee8f35" />
      ))}
      <g fill="#d3d3d1">
        <circle cx="31" cy="41" r="4.800" />
        <circle cx="45" cy="41" r="4.800" />
        <circle cx="31" cy="55" r="4.800" />
        <circle cx="45" cy="55" r="4.800" />
        <rect x="26" y="64.200" width="24" height="9.600" rx="4.800" />
      </g>
    </Tile>
  );
}

function Word() {
  return (
    <Tile bg="bg-white">
      <path d="M24 15h49a2 2 0 0 1 2 2v13H24z" fill="#5ba2e6" />
      <path d="M24 30h51v15H24z" fill="#4379cb" />
      <path d="M24 45h51v15H24z" fill="#2f5bb8" />
      <path d="M24 60h51v13a2 2 0 0 1-2 2H24z" fill="#20408b" />
      <rect x="8" y="28" width="34" height="34" rx="2" fill="#2350b0" />
      <text x="25" y="53.500" fill="#fff" fontSize="23" fontWeight="700" textAnchor="middle">
        W
      </text>
    </Tile>
  );
}

function Preview() {
  return (
    <div className="relative">
      <Tile bg="bg-[#efefef]">
        <rect x="7" y="7" width="76" height="76" rx="15" fill="#9db9e6" />
        <path d="M7 32h76v17H7z" fill="#b1c9ec" />
        <path d="M7 48h76v20a15 15 0 0 1-15 15H22A15 15 0 0 1 7 68z" fill="#3a5684" />
        <path d="M7 62q14-7 28-1t30-2v20q-4 4-10 4H22C13 83 7 76 7 68z" fill="#c9d6e3" />
        <path d="M8 61l9-4 8 4-6 3zM22 78l8-4 12 6-4 3H24z" fill="#4d4238" />
        <path d="M9 74l9 3 5 6h-5q-7-2-9-9z" fill="#b98e4c" />
      </Tile>
      <svg className="absolute top-[43px] left-[38px] h-[52px] w-[56px]" viewBox="0 0 56 52">
        <path d="M10 20h36l9 26q1 5-6 6H8q-7-1-6-6z" fill="#8e9498" />
        <path d="M13 20h8L13 46l-8 1zM37 20h7l7 27-8-1z" fill="#d9dddf" />
        <path d="M18 22h20l5 22q-15 5-30 0z" fill="#c9d0d6" />
        <path d="M12 43q16-6 32 0l2 4q-18 5-36 0z" fill="#f3f4f5" />
        <path d="M24 24l8 2-2 6-8-2zM18 34l9-2 1 8-9 1zM31 33l7 2-1 6-7-1z" fill="#5d6770" />
        <rect x="8" y="2" width="40" height="19" rx="5" fill="#141414" />
        <ellipse cx="28" cy="4.500" rx="19" ry="4" fill="#3a3a3a" />
      </svg>
    </div>
  );
}

function Messages() {
  return (
    <Tile bg="bg-linear-to-b from-[#86f380] to-[#56bd47]">
      <defs>
        <radialGradient id="bubble" cx="0.5" cy="0.55" r="0.6">
          <stop offset="0" stopColor="#dff3dc" />
          <stop offset="1" stopColor="#fbfffa" />
        </radialGradient>
      </defs>
      <path d="M45 15c19 0 33 12 33 27.500S64 70 45 70q-5 0-9-1c-3 3-7 5-11 5.500 2-2 3.500-5 3.500-8C18 62 12 53 12 42.500 12 27 26 15 45 15z" fill="url(#bubble)" />
    </Tile>
  );
}

function Simulator() {
  return (
    <div className="relative">
      <Tile bg="bg-linear-to-b from-[#52b0ee] to-[#2f5bdc]">
        <rect x="6" y="6" width="78" height="78" rx="16" stroke="#a9d4f7" strokeWidth="1.500" />
        <circle cx="45" cy="42" r="29" stroke="#7fbcf2" strokeWidth="1.200" />
        <g stroke="#d7ecfd" strokeWidth="1.800" strokeLinejoin="round" strokeLinecap="round">
          <path d="M37 21c-1-4 5-6 7-2l26 48-7 4z" fill="#4b9cec" />
          <path d="M46 19c2-4 9-2 7 3L29 70l-8 2 1-7z" fill="#4b9cec" />
          <rect x="14" y="52" width="62" height="8" rx="4" fill="#5aa7ef" />
        </g>
      </Tile>
      <svg className="absolute top-[20px] left-[34px] h-[78px] w-[64px]" viewBox="0 0 64 78">
        <rect x="17" y="1" width="30" height="74" rx="6" transform="rotate(26 32 38)" fill="#141414" />
        <path d="M21 23l5 1 12 24q1 5-4 5-3 0-5-4z" fill="#e9e9ea" />
        <rect x="22" y="32" width="22" height="8.500" rx="4" fill="#d9dadb" />
        <path d="M21 23l5 1 10 20-4 2z" fill="#f5f5f5" />
      </svg>
    </div>
  );
}

function MiniChrome() {
  return (
    <svg className="absolute top-[47px] left-[69px] h-[34px] w-[34px]" viewBox="0 0 90 90">
      <rect width="90" height="90" rx="21" fill="#f7f5f5" />
      <ChromeMark />
    </svg>
  );
}

function EditorThumb() {
  return (
    <div className="relative mt-3.5 h-[78px] w-[106px]">
      <svg className="h-[62px] w-[106px]" viewBox="0 0 106 62">
        <rect width="106" height="62" fill="#232324" />
        <rect width="106" height="9" fill="#f3f2f2" />
        <path d="M3 2.500h98" stroke="#c98b8b" strokeWidth="1.500" strokeDasharray="2 5" />
        <path d="M3 6.500h98" stroke="#8a8f96" strokeWidth="1.300" strokeDasharray="5 3" />
        <rect y="9" width="19" height="53" fill="#151515" />
        <path d="M2 12h12M2 18h14M2 24h10M2 28h13M2 31h13M2 36h9M2 40h14M2 43h13M2 47h14M2 58h11" stroke="#6e6e6e" strokeWidth="1" />
        <rect x="39" y="20" width="49" height="22" fill="#0c0c0c" />
        <path d="M40 26h9M40 31h25M42 36h44" stroke="#57303a" strokeWidth="1" strokeDasharray="4 2" />
        <path d="M39 45h47M39 48h47M39 52h20" stroke="#8a8a8a" strokeWidth="1" />
      </svg>
      <MiniChrome />
    </div>
  );
}

function MapThumb() {
  return (
    <div className="relative mt-3.5 h-[78px] w-[106px]">
      <svg className="h-[62px] w-[106px]" viewBox="0 0 106 62" fill="none">
        <rect width="106" height="62" fill="#f1ebe0" />
        <rect width="106" height="9" fill="#2a2b2e" />
        <path d="M3 6.500h98" stroke="#7f8186" strokeWidth="1.200" strokeDasharray="4 3" />
        <rect y="9" width="35" height="53" fill="#fafafa" />
        <path d="M8 12h22M8 16h16M8 27h20M8 32h22M8 35h18M8 38h20M8 45h22M8 48h16M8 51h20M8 57h22" stroke="#b4b4b4" strokeWidth="1" />
        <path d="M8 30h2M8 42h2M8 56h2" stroke="#d84b3e" strokeWidth="2" />
        <path d="M61 9L52 62M37 54l52-45M44 62l55-50M84 9l20 53M36 24l34-4 36 12" stroke="#a3adc2" strokeWidth="1.200" />
        <path d="M55 35h10" stroke="#c9453c" strokeWidth="1.500" />
        <path d="M97 12h7" stroke="#3b78e7" strokeWidth="3" />
        <rect x="36" y="55" width="6" height="6" fill="#3b3b3b" />
      </svg>
      <MiniChrome />
    </div>
  );
}

function Trash() {
  return (
    <svg className="-mt-[9px] h-[105px] w-[82px]" viewBox="0 0 82 105">
      <defs>
        <linearGradient id="bin" x1="0" y1="0" x2="1" y2="0">
          <stop offset="0" stopColor="#85898c" />
          <stop offset="0.200" stopColor="#5f6366" />
          <stop offset="0.550" stopColor="#7d8183" />
          <stop offset="0.850" stopColor="#616568" />
          <stop offset="1" stopColor="#94989a" />
        </linearGradient>
      </defs>
      <ellipse cx="41" cy="16" rx="40.500" ry="10" fill="#4c5053" />
      <path d="M7 14l8-9 8 3 6-6 8 4 8 8 4-13 8 8 8-3 8 9-6 16q-26 7-53 0z" fill="#dfe1e2" />
      <path d="M18 17l10-3 8 3-4 8H20zM45 9l7 4-4 9-7-4z" fill="#5c6064" />
      <path d="M26 14l8-2 4 5-8 6z" fill="#4aa6d0" />
      <path d="M48 12l10-2 5 8-9 8z" fill="#3c4a86" />
      <path d="M56 16l7 2-5 7z" fill="#c9603a" />
      <path d="M12 13l10-6M60 8l8 8M66 20l6-6M30 8l8 6M14 22l6 8M40 22l6 8M64 24l-4 8" stroke="#7a7e82" strokeWidth="1.500" />
      <path d="M.5 16C2 24 7 26 14 28q27 6 54 0c7-2 12-4 13.500-12L71 95c-1 6-14 10-30 10S12 101 11 95z" fill="url(#bin)" opacity="0.960" />
      <path d="M12 90q28 12 58 0l-.8 5c-1 6-13 9-28 9s-27-3-28-9z" fill="#a2a5a7" opacity="0.600" />
    </svg>
  );
}

function DockCell({ width, dot, children }: { width: string; dot?: string; children: ReactNode }) {
  return (
    <div className={`flex shrink-0 flex-col items-center ${width}`}>
      <div className="h-[109px]">{children}</div>
      {dot && <span className={`h-2 w-2 rounded-full ${dot}`} />}
    </div>
  );
}

const mainApps: [string, ReactNode, string?][] = [
  ["finder", <Finder />, "bg-[#ff9fd6]"],
  ["launchpad", <Launchpad />],
  ["photobooth", <PhotoBooth />],
  ["calendar", <Calendar />, "bg-[#ff8fe0]"],
  ["chrome", <ChromeTile />, "bg-[#cc93b8]"],
  ["vscode", <VSCode />, "bg-[#a39aa0]"],
  ["safari", <Safari />],
  ["notes", <Notes />, "bg-[#9c9899]"],
  ["terminal", <Terminal />, "bg-[#9c9899]"],
  ["settings", <Settings />],
  ["youtube", <YouTubeTile />],
  ["whatsapp", <WhatsAppTile />, "bg-[#9c9899]"],
  ["outlook", <Outlook />, "bg-[#9c9899]"],
  ["calculator", <Calculator />],
];

const recentApps: [string, ReactNode, string][] = [
  ["word", <Word />, "bg-[#c596b4]"],
  ["chrome", <ChromeTile />, "bg-[#c997bd]"],
  ["preview", <Preview />, "bg-[#a893bd]"],
  ["messages", <Messages />, "bg-[#bd97ff]"],
  ["simulator", <Simulator />, "bg-[#ff9df5]"],
];

function Dock() {
  return (
    <div className="relative z-10 flex h-[142px] w-[2735px] rounded-[46px] border-2 border-white/20 bg-[linear-gradient(to_bottom,rgba(20,20,25,0.28),transparent_75%),linear-gradient(to_right,#9c2c60_0,#95224f_100px,#a01845_230px,#a3164c_330px,#97126c_420px,#80126a_480px,#52103e_540px,#2c1022_590px,#1a1415_670px,#1a1415_1500px,#2a141e_1600px,#4a1331_1690px,#4a1434_1850px,#431640_1950px,#2c1638_2000px,#2a184e_2050px,#431a92_2120px,#6b1b90_2210px,#9322a0_2290px,#8f1d8e_2350px,#6a1750_2400px,#391c38_2460px,#1e2233_2540px,#16263c_2640px,#17171e_2725px)] pt-[19px] pl-[5px] shadow-[0_-20px_90px_rgba(0,0,0,0.190)]">
      {mainApps.map(([name, icon, dot]) => (
        <DockCell key={name} width="w-[118.9px]" dot={dot}>
          {icon}
        </DockCell>
      ))}
      <span className="mr-[26px] ml-[27px] -mt-[3px] h-[106px] w-0.5 shrink-0 bg-[#7d5a6c]" />
      {recentApps.map(([name, icon, dot]) => (
        <DockCell key={name} width="w-[119px]" dot={dot}>
          {icon}
        </DockCell>
      ))}
      <span className="mr-[27px] ml-[26px] -mt-[3px] h-[106px] w-0.5 shrink-0 bg-[#c45fc0]" />
      <DockCell width="w-[118px]">
        <EditorThumb />
      </DockCell>
      <DockCell width="w-[118px]">
        <MapThumb />
      </DockCell>
      <DockCell width="w-[118px]">
        <Trash />
      </DockCell>
    </div>
  );
}

export default function App() {
  return (
    <div className="flex h-[1912px] w-[2940px] flex-col overflow-hidden bg-black font-['Inter',sans-serif]">
      <MenuBar />
      <div className="flex h-[1684px] shrink-0 flex-col overflow-hidden rounded-[22px] bg-white">
        <TabStrip />
        <Toolbar />
        <BookmarksBar />
        <Page />
      </div>
      <div className="h-[154px] shrink-0 bg-[linear-gradient(to_bottom,#000_0,rgba(0,0,0,0.800)_16px,rgba(0,0,0,0.350)_34px,rgba(0,0,0,0.100)_55px,transparent_80px),linear-gradient(to_right,#ff5474_0,#f8557d_80px,#e8309a_105px,#e02a90_165px,#e01010_205px,#e8002c_250px,#e02050_330px,#d01085_370px,#e01890_470px,#c00078_525px,#400020_540px,#000_600px,#000_795px,#0e3038_805px,#000_818px,#000_1745px,#c00060_1756px,#b0005c_1800px,#400020_1806px,#000_1865px,#000_1940px,#f00060_1948px,#e00058_1964px,#200010_1970px,#c00080_1978px,#b00070_2010px,#0a0a1a_2030px,#04041a_2140px,#1a14b0_2160px,#2018c0_2230px,#8018d0_2300px,#c850e0_2370px,#e010c0_2410px,#f000b0_2440px,#d00080_2500px,#b0005c_2526px,#040810_2531px,#081018_2600px,#061424_2660px,#103a78_2733px,#000_2738px)] pt-0.5 pl-[102px]">
        <Dock />
      </div>
    </div>
  );
}
